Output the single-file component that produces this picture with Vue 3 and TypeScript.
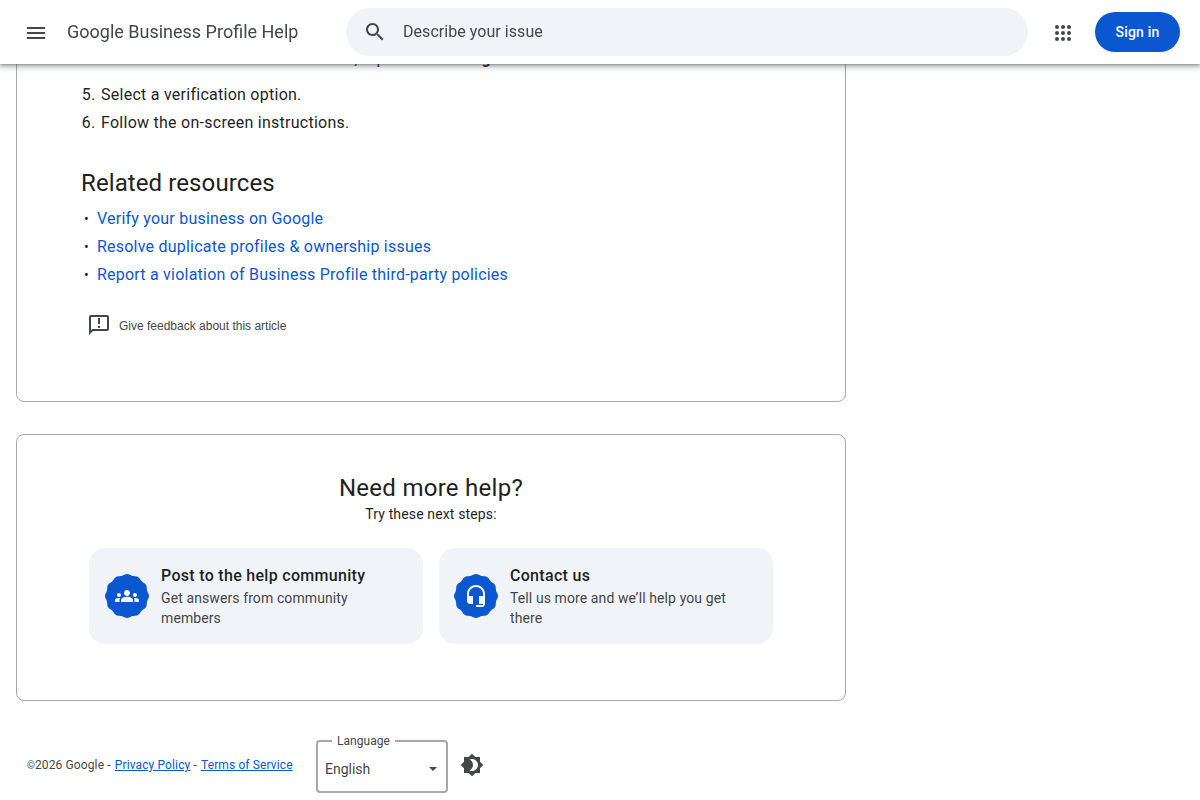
<template>
  <div class="help-page">
    <!-- Top bar -->
    <header class="top-bar">
      <button class="icon-btn menu-btn" aria-label="Main menu">
        <svg viewBox="0 0 24 24" width="24" height="24"><path d="M3 18h18v-2H3v2zm0-5h18v-2H3v2zm0-7v2h18V6H3z" /></svg>
      </button>
      <div class="product-name">Google Business Profile Help</div>
      <div class="search-box">
        <svg viewBox="0 0 24 24" width="24" height="24"><path d="M15.5 14h-.79l-.28-.27C15.41 12.59 16 11.11 16 9.5 16 5.91 13.09 3 9.5 3S3 5.91 3 9.5 5.91 16 9.5 16c1.61 0 3.09-.59 4.23-1.57l.27.28v.79l5 4.99L20.49 19l-4.99-5zm-6 0C7.01 14 5 11.99 5 9.5S7.01 5 9.5 5 14 7.01 14 9.5 11.99 14 9.5 14z" /></svg>
        <span class="search-placeholder">Describe your issue</span>
      </div>
      <button class="icon-btn apps-btn" aria-label="Google apps">
        <svg viewBox="0 0 24 24" width="24" height="24">
          <circle v-for="dot in appDots" :key="dot.id" :cx="dot.x" :cy="dot.y" r="2" />
        </svg>
      </button>
      <button class="sign-in">Sign in</button>
    </header>

    <main class="content">
      <!-- Article -->
      <section class="card article">
        <ol class="steps" start="4">
          <li class="step-hidden">If the address here needs edits, tap on the <b>Manage</b> the business address.</li>
          <li>Select a verification option.</li>
          <li>Follow the on-screen instructions.</li>
        </ol>

        <h2 class="related-title">Related resources</h2>
        <ul class="related-list">
          <li v-for="link in relatedLinks" :key="link"><a href="#">{{ link }}</a></li>
        </ul>

        <div class="feedback">
          <svg viewBox="0 0 24 24" width="24" height="24"><path d="M20 2H4c-1.1 0-2 .9-2 2v18l4-4h14c1.1 0 2-.9 2-2V4c0-1.1-.9-2-2-2zm0 14H5.17L4 17.17V4h16v12zM11 5h2v6h-2zm0 8h2v2h-2z" /></svg>
          <span>Give feedback about this article</span>
        </div>
      </section>

      <!-- Need more help -->
      <section class="card more-help">
        <h2 class="more-title">Need more help?</h2>
        <p class="more-sub">Try these next steps:</p>
        <div class="tiles">
          <a v-for="tile in tiles" :key="tile.title" href="#" class="tile">
            <span class="badge">
              <svg viewBox="0 0 44 44" width="44" height="44" class="badge-bg"><path :d="badgePath" /></svg>
              <svg viewBox="0 0 24 24" width="24" height="24" class="badge-icon"><path :d="tile.icon" /></svg>
            </span>
            <span class="tile-text">
              <span class="tile-title">{{ tile.title }}</span>
              <span class="tile-desc">{{ tile.desc }}</span>
            </span>
          </a>
        </div>
      </section>

      <!-- Footer -->
      <footer class="footer">
        <div class="legal">
          <span class="copy">©</span>2026 Google - <a href="#">Privacy Policy</a> - <a href="#">Terms of Service</a>
        </div>
        <fieldset class="language">
          <legend>Language</legend>
          <div class="language-value">
            <span>English</span>
            <i class="caret"></i>
          </div>
        </fieldset>
        <svg class="theme-icon" viewBox="0 0 24 24" width="24" height="24"><path d="M20 8.69V4h-4.69L12 .69 8.69 4H4v4.69L.69 12 4 15.31V20h4.69L12 23.31 15.31 20H20v-4.69L23.31 12 20 8.69zM12 18c-.89 0-1.74-.2-2.5-.55C11.56 16.5 13 14.42 13 12s-1.44-4.5-3.5-5.45C10.26 6.2 11.11 6 12 6c3.31 0 6 2.69 6 6s-2.69 6-6 6z" /></svg>
      </footer>
    </main>
  </div>
</template>

<script setup lang="ts">
const appDots = [6, 12, 18].flatMap((y) =>
  [6, 12, 18].map((x) => ({ id: `${x}-${y}`, x, y }))
);

const relatedLinks = [
  'Verify your business on Google',
  'Resolve duplicate profiles & ownership issues',
  'Report a violation of Business Profile third-party policies'
];

const tiles = [
  {
    title: 'Post to the help community',
    desc: 'Get answers from community members',
    icon: 'M4,13c1.1,0,2-0.9,2-2c0-1.1-0.9-2-2-2s-2,0.9-2,2C2,12.1,2.9,13,4,13z M5.13,14.1C4.76,14.04,4.39,14,4,14c-0.99,0-1.93,0.21-2.78,0.58C0.48,14.9,0,15.62,0,16.43V18l4.5,0v-1.61C4.5,15.56,4.73,14.78,5.13,14.1z M20,13c1.1,0,2-0.9,2-2c0-1.1-0.9-2-2-2s-2,0.9-2,2C18,12.1,18.9,13,20,13z M24,16.43c0-0.81-0.48-1.53-1.22-1.85C21.93,14.21,20.99,14,20,14c-0.39,0-0.76,0.04-1.13,0.1c0.4,0.68,0.63,1.46,0.63,2.29V18l4.5,0V16.43z M16.24,13.65c-1.17-0.52-2.61-0.9-4.24-0.9c-1.63,0-3.07,0.39-4.24,0.9C6.68,14.13,6,15.21,6,16.39V18h12v-1.61C18,15.21,17.32,14.13,16.24,13.65z M12,12c1.66,0,3-1.34,3-3s-1.34-3-3-3S9,7.34,9,9S10.34,12,12,12z'
  },
  {
    title: 'Contact us',
    desc: 'Tell us more and we’ll help you get there',
    icon: 'M12 1c-4.97 0-9 4.03-9 9v7c0 1.66 1.34 3 3 3h3v-8H5v-2c0-3.87 3.13-7 7-7s7 3.13 7 7v2h-4v8h4v1h-7v2h6c1.66 0 3-1.34 3-3V10c0-4.97-4.03-9-9-9z'
  }
];

// scalloped edge of the round badge
const badgePath = (() => {
  const points: string[] = [];
  for (let i = 0; i < 120; i++) {
    const a = (i / 120) * Math.PI * 2;
    const r = 21.4 + 0.6 * Math.cos(a * 12);
    points.push(`${(22 + r * Math.cos(a)).toFixed(2)} ${(22 + r * Math.sin(a)).toFixed(2)}`);
  }
  return `M${points.join('L')}Z`;
})();
</script>

<style scoped>
.help-page {
  position: relative;
  color: #1f1f1f;
  font-family: Roboto, "Liberation Sans", sans-serif;
}

/* Top bar */
.top-bar {
  position: fixed;
  top: 0;
  left: 0;
  right: 0;
  z-index: 10;
  height: 64px;
  box-sizing: border-box;
  display: flex;
  align-items: center;
  padding: 0 20px 0 24px;
  background: #fff;
  box-shadow: 0 1px 3px rgba(60, 64, 67, 0.5), 0 3px 6px 1px rgba(60, 64, 67, 0.25);
}

.icon-btn {
  width: 24px;
  height: 24px;
  padding: 0;
  border: none;
  background: none;
  fill: #444746;
}

.menu-btn {
  margin-top: 1px;
}

.product-name {
  width: 279px;
  margin-left: 19px;
  padding-bottom: 2px;
  font-size: 18px;
  color: #444746;
  white-space: nowrap;
}

.search-box {
  width: 682px;
  height: 48px;
  display: flex;
  align-items: center;
  gap: 16px;
  padding-left: 17px;
  box-sizing: border-box;
  background: #f0f4f9;
  border-radius: 24px;
  fill: #444746;
}

.search-placeholder {
  padding-bottom: 2px;
  font-size: 16px;
  letter-spacing: 0.05px;
  color: #444746;
}

.apps-btn {
  margin: 2px 0 0 23px;
}

.sign-in {
  width: 85px;
  height: 40px;
  margin-left: 20px;
  padding: 0 0 1px;
  border: none;
  border-radius: 20px;
  background: #0b57d0;
  color: #fff;
  font-family: inherit;
  font-size: 14px;
  font-weight: 500;
  letter-spacing: 0.2px;
}

/* Cards */
.content {
  width: 830px;
  margin-left: 16px;
}

.card {
  box-sizing: border-box;
  border: 1px solid #a8a8a8;
  border-radius: 8px;
  background: #fff;
}

.article {
  height: 402px;
  padding: 44px 64px 0;
}

.steps {
  margin: 0;
  padding: 0 0 0 20px;
  font-size: 16px;
  line-height: 28px;
  letter-spacing: 0.26px;
}

.steps li::marker {
  content: counter(list-item) ".\2009\200A";
}

.steps .step-hidden {
  margin-bottom: 8px;
  padding-left: 27px;
  list-style: none;
}

.steps .step-hidden::marker {
  content: none;
}

.related-title {
  margin: 31px 0 0;
  font-size: 24px;
  font-weight: 400;
  line-height: 30px;
  letter-spacing: 0.1px;
}

.related-list {
  margin: 7px 0 0;
  padding: 0;
  font-size: 16px;
  line-height: 28px;
  letter-spacing: 0.22px;
  list-style: none;
}

.related-list li {
  display: flex;
}

.related-list li::before {
  content: "•";
  width: 13px;
  padding-left: 3px;
  font-size: 14px;
}

.related-list a {
  color: #0b57d0;
  text-decoration: none;
}

.feedback {
  display: flex;
  align-items: center;
  gap: 8px;
  margin: 24px 0 0 6px;
  font-family: "Liberation Sans", Arial, sans-serif;
  font-size: 12px;
  color: #444746;
  fill: #444746;
}

.feedback span {
  padding-top: 2px;
}

.more-help {
  height: 267px;
  margin-top: 32px;
  padding-top: 37px;
  text-align: center;
}

.more-title {
  margin: 0;
  font-size: 24px;
  font-weight: 400;
  line-height: 32px;
  letter-spacing: 0.27px;
}

.more-sub {
  margin: 0 0 24px;
  font-size: 14px;
  line-height: 20px;
  letter-spacing: 0.14px;
}

.tiles {
  display: grid;
  grid-template-columns: 334px 334px;
  gap: 16px;
  justify-content: center;
}

.tile {
  display: flex;
  align-items: center;
  gap: 12px;
  padding: 16px;
  border-radius: 16px;
  background: #f0f4f9;
  color: inherit;
  text-align: left;
  text-decoration: none;
}

.tile:last-child {
  padding-left: 15px;
}

.badge {
  position: relative;
  flex: none;
  width: 44px;
  height: 44px;
  display: flex;
  align-items: center;
  justify-content: center;
}

.badge-bg {
  position: absolute;
  inset: 0;
  fill: #0b57d0;
}

.badge-icon {
  position: relative;
  fill: #fff;
}

.tile-text {
  display: flex;
  flex-direction: column;
}

.tile-title {
  font-size: 16px;
  font-weight: 500;
  line-height: 24px;
  letter-spacing: 0.3px;
}

.tile-desc {
  font-size: 14px;
  line-height: 20px;
  letter-spacing: 0.1px;
  color: #444746;
}

/* Footer */
.footer {
  display: flex;
  align-items: center;
  padding: 32px 0 7px 11px;
  font-size: 12px;
  color: #444746;
}

.legal {
  margin-top: 4px;
  width: 289px;
  letter-spacing: 0.12px;
  white-space: nowrap;
}

.legal a {
  margin-left: 1px;
  color: #0b57d0;
}

.copy {
  font-size: 10px;
}

.language {
  box-sizing: border-box;
  width: 132px;
  height: 60px;
  margin: 0;
  padding: 0 7px;
  border: 2px solid #a8a8a8;
  border-radius: 4px;
}

.language legend {
  margin-left: 7px;
  padding: 0 5px;
  font-size: 12px;
  line-height: 16px;
  letter-spacing: 0.05px;
}

.language-value {
  display: flex;
  align-items: center;
  justify-content: space-between;
  padding: 10px 2px 0 0;
  font-size: 14px;
  line-height: 20px;
}

.caret {
  width: 0;
  height: 0;
  border-left: 4px solid transparent;
  border-right: 4px solid transparent;
  border-top: 4px solid #444746;
}

.theme-icon {
  margin: 4px 0 0 12px;
  fill: #444746;
}
</style>
